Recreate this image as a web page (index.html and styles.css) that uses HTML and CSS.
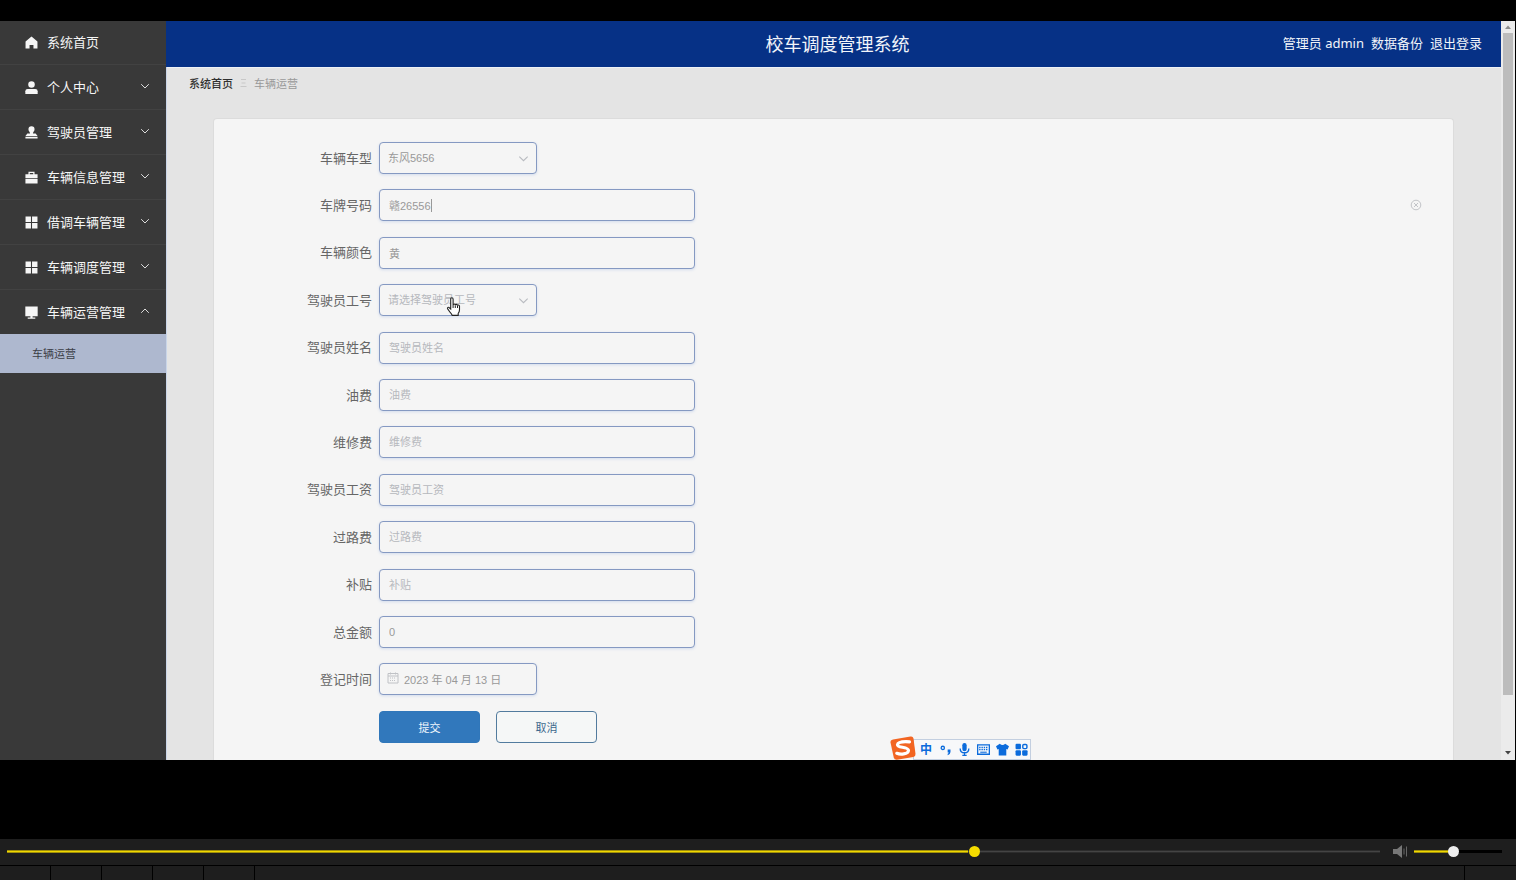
FILE: index.html
```html
<!DOCTYPE html>
<html lang="zh-CN">
<head>
<meta charset="utf-8">
<title>校车调度管理系统</title>
<link rel="stylesheet" href="styles.css">
</head>
<body>
<svg class="defs" aria-hidden="true">
  <symbol id="chevron" viewBox="0 0 10 10"><path d="M1.2 3.2 5 7l3.800-3.800" fill="none" stroke="currentColor"/></symbol>
  <symbol id="grid" viewBox="0 0 12 12"><path d="M.5.5h5v5h-5zM6.500.5h5v5h-5zM.5 6.500h5v5h-5zM6.500 6.500h5v5h-5z" fill="currentColor"/></symbol>
</svg>

<div class="screen">
  <nav class="sidebar">
    <a class="item first" href="#"><svg class="icon" viewBox="0 0 12 12"><path d="M6 .4 11.500 5v6.500H7.800V8.200H4.200v3.300H.5V5z" fill="currentColor"/></svg><span>系统首页</span></a>
    <a class="item" href="#"><svg class="icon" viewBox="0 0 12 12"><circle cx="6" cy="3.200" r="3" fill="currentColor"/><path d="M.3 12V9.500Q.3 7.300 2.500 7.300h7q2.200 0 2.200 2.200V12z" fill="currentColor"/></svg><span>个人中心</span><svg class="arrow"><use href="#chevron"/></svg></a>
    <a class="item" href="#"><svg class="icon" viewBox="0 0 12 12"><path d="M6 .3a2.800 2.800 0 0 1 2.800 2.900C8.800 4.800 7.300 5.500 7.300 7h2.500l1.800 2.300H.4L2.200 7h2.500c0-1.500-1.500-2.200-1.500-3.800A2.800 2.800 0 0 1 6 .3zM.4 10h11.200v1.500H.4z" fill="currentColor"/></svg><span>驾驶员管理</span><svg class="arrow"><use href="#chevron"/></svg></a>
    <a class="item" href="#"><svg class="icon" viewBox="0 0 12 12"><path d="M3.200 3V.8h5.600V3h2.800v3.500H.4V3zM4.400 3h3.200V1.900H4.400zM.4 7.200h11.200v4.300H.4z" fill="currentColor" fill-rule="evenodd"/></svg><span>车辆信息管理</span><svg class="arrow"><use href="#chevron"/></svg></a>
    <a class="item" href="#"><svg class="icon"><use href="#grid"/></svg><span>借调车辆管理</span><svg class="arrow"><use href="#chevron"/></svg></a>
    <a class="item" href="#"><svg class="icon"><use href="#grid"/></svg><span>车辆调度管理</span><svg class="arrow"><use href="#chevron"/></svg></a>
    <a class="item open" href="#"><svg class="icon" viewBox="0 0 12 12"><path d="M.3.5h11.400v9H7v1h2.500v1.200h-7v-1.200H5v-1H.3z" fill="currentColor"/></svg><span>车辆运营管理</span><svg class="arrow"><use href="#chevron"/></svg></a>
    <a class="subitem" href="#">车辆运营</a>
  </nav>

  <div class="main">
    <header class="header">
      <h1>校车调度管理系统</h1>
      <div class="account"><span>管理员 admin</span><a href="#">数据备份</a><a href="#">退出登录</a></div>
    </header>
    <nav class="crumbs"><a href="#">系统首页</a><svg viewBox="0 0 7 10"><path d="M1 1.500h5M1.500 5h4M.5 8.500h6" stroke="currentColor" fill="none"/></svg><span>车辆运营</span></nav>
    <form class="card">
      <div class="row"><label for="model">车辆车型</label><div class="field short"><select id="model"><option>东风5656</option></select><svg class="drop"><use href="#chevron"/></svg></div></div>
      <div class="row"><label for="plate">车牌号码</label><div class="field"><input id="plate" type="text" value="赣26556"><span class="caret"></span></div>
        <button class="clear" type="button" aria-label="清空"><svg viewBox="0 0 12 12"><path d="M4 4l4 4M8 4 4 8" stroke="currentColor"/><circle cx="6" cy="6" r="4.800" fill="none" stroke="currentColor"/></svg></button></div>
      <div class="row"><label for="color">车辆颜色</label><div class="field"><input id="color" type="text" value="黄"></div></div>
      <div class="row"><label for="driver">驾驶员工号</label><div class="field short"><select id="driver" class="empty"><option>请选择驾驶员工号</option></select><svg class="drop"><use href="#chevron"/></svg>
        <svg class="pointer" viewBox="0 0 14 20"><path d="M4.200 12V2.200q0-1.400 1.200-1.400t1.200 1.400V8q0-1 1.100-1T8.800 8.200q.1-.9 1.100-.8t1.100 1.200q.2-.7 1-.6t1 1.100v3.600q0 2.300-1.300 3.700v2H5.800q-.8-1.600-2.300-3.200L1.200 11.900q-.6-1 .2-1.500T3.100 11z" fill="#fff" stroke="#222" stroke-width="1.100"/><path d="M6.600 8v3M8.800 8.400V11M11 8.800V11" stroke="#222" fill="none"/></svg></div></div>
      <div class="row"><label for="name">驾驶员姓名</label><div class="field"><input id="name" type="text" placeholder="驾驶员姓名"></div></div>
      <div class="row"><label for="fuel">油费</label><div class="field"><input id="fuel" type="text" placeholder="油费"></div></div>
      <div class="row"><label for="repair">维修费</label><div class="field"><input id="repair" type="text" placeholder="维修费"></div></div>
      <div class="row"><label for="wage">驾驶员工资</label><div class="field"><input id="wage" type="text" placeholder="驾驶员工资"></div></div>
      <div class="row"><label for="toll">过路费</label><div class="field"><input id="toll" type="text" placeholder="过路费"></div></div>
      <div class="row"><label for="subsidy">补贴</label><div class="field"><input id="subsidy" type="text" placeholder="补贴"></div></div>
      <div class="row"><label for="total">总金额</label><div class="field"><input id="total" type="text" value="0"></div></div>
      <div class="row"><label for="date">登记时间</label><div class="field short"><input id="date" class="date" type="text" value="2023 年 04 月 13 日"><svg class="calendar" viewBox="0 0 12 12"><path d="M1 1.500h10v9.500H1zM1 4h10M3.500.5v2M8.500.5v2" fill="none" stroke="currentColor"/><path d="M3 6h6M3 8.500h6" stroke="currentColor" stroke-dasharray="1 1"/></svg></div></div>
      <div class="row actions"><button class="submit" type="submit">提交</button><button class="cancel" type="button">取消</button></div>
    </form>
  </div>

  <div class="scrollbar"><svg viewBox="0 0 8 4"><path d="M1 4 4 .5 7 4z" fill="#8c8c8c"/></svg><div class="thumb"></div><svg viewBox="0 0 8 4"><path d="M1 0 4 3.500 7 0z" fill="#444"/></svg></div>

  <div class="ime">
    <svg class="sogou" viewBox="0 0 26 24"><path d="M3 3.500 20.500.5q2.500-.4 3 2l2 15.500q.2 2.500-2.200 3L7 23.700q-2.500.3-3.200-2L.5 6.500Q.2 4 3 3.500z" fill="#f26522"/><path d="M19.500 5.800Q8 5 7.500 8.800C7.300 12 18.500 10.500 18.500 14.500 18.300 18.500 10 18.500 6.800 17.300" fill="none" stroke="#fff" stroke-width="3.200" stroke-linecap="round"/></svg>
    <div class="ime-bar">
      <span>中</span>
      <svg viewBox="0 0 12 12"><circle cx="3.500" cy="4.500" r="1.500" fill="none" stroke="currentColor" stroke-width="1.200"/><path d="M8 6h2.600v2.200Q10.500 10.500 8 11.200V10q1-.5 1-1.300H8z" fill="currentColor"/></svg>
      <svg viewBox="0 0 12 12"><rect x="4" y="0" width="4" height="7.500" rx="2" fill="currentColor"/><path d="M2 5q0 4 4 4t4-4M6 9v2.500M4 11.500h4" fill="none" stroke="currentColor" stroke-width="1.200"/></svg>
      <svg viewBox="0 0 12 12"><path d="M.6 1.800h10.800v8.600H.6z" fill="none" stroke="currentColor" stroke-width="1.200"/><path d="M2 4h8M2 6h8" stroke="currentColor" stroke-width="1.200" stroke-dasharray="1.300 .8"/><path d="M3 8.500h6" stroke="currentColor"/></svg>
      <svg viewBox="0 0 12 12"><path d="M3.500.7Q6 3 8.500.7L12 3l-1.300 3L9.500 5.500v6h-7v-6L1.300 6 0 3z" fill="currentColor"/></svg>
      <svg viewBox="0 0 12 12"><rect x=".5" y=".8" width="5" height="5" rx="1" fill="currentColor"/><rect x="7.200" y="1.400" width="3.800" height="3.800" rx="1" fill="none" stroke="currentColor" stroke-width="1.300"/><rect x=".5" y="6.700" width="5" height="5" rx="1" fill="currentColor"/><rect x="6.600" y="6.700" width="5" height="5" rx="1" fill="currentColor"/></svg>
    </div>
  </div>
</div>

<div class="player">
  <div class="controls">
    <input class="slider seek" type="range" min="0" max="1000" value="706" aria-label="播放进度">
    <svg class="speaker" viewBox="0 0 15 13"><path d="M0 4h4l5-4v13L4 9H0z" fill="#777"/><path d="M11 3.500v6M13.500 1.500v10" stroke="#666" stroke-width="1"/></svg>
    <input class="slider volume" type="range" min="0" max="1000" value="440" aria-label="音量">
  </div>
  <div class="strip"><i></i><i></i><i></i><i></i><i></i><i class="wide"></i><i></i></div>
</div>
</body>
</html>
```

FILE: styles.css
```css
* { box-sizing: border-box; }

body {
  margin: 0;
  padding-top: 21px;
  min-height: 100vh;
  display: flex;
  flex-direction: column;
  gap: 79px;
  background: #000;
  font-family: "Noto Sans", "Noto Sans CJK SC", sans-serif;
  font-size: 13px;
}

a { color: inherit; text-decoration: none; }
.defs { position: absolute; width: 0; height: 0; }

.screen {
  position: relative;
  flex: 1;
  display: flex;
  padding-right: 1px;
}

.sidebar {
  width: 166px;
  flex: none;
  background: #393939;
  color: #f6f6f6;
}

.item {
  display: flex;
  align-items: center;
  gap: 9px;
  height: 45px;
  padding: 0 16px 0 25px;
  border-bottom: 1px solid #424242;
}
.item.first { height: 44px; }
.item.open { height: 44px; border-bottom: 0; }
.item span { padding-bottom: 2px; }
.icon { width: 13px; height: 13px; flex: none; }
.arrow { width: 10px; height: 10px; margin: 0 0 2px auto; color: #ddd; }
.open .arrow { transform: rotate(180deg); }

.subitem {
  display: flex;
  align-items: center;
  height: 39px;
  padding: 0 0 2px 32px;
  background: #aeb8cf;
  color: #3c4048;
  font-size: 11px;
}

.main {
  flex: 1;
  min-width: 0;
  display: flex;
  flex-direction: column;
  background: #e4e4e4;
  border-left: 1px solid #c9d5e8;
}

.header {
  display: grid;
  grid-template-columns: 1fr auto 1fr;
  align-items: center;
  height: 46px;
  margin-left: -1px;
  padding: 0 19px 3px 27px;
  background: #063186;
  color: #f2f5fa;
}
.header h1 { grid-column: 2; margin: 0; font-size: 18px; font-weight: 400; }
.account { display: flex; justify-content: flex-end; gap: 7px; }

.crumbs {
  display: flex;
  align-items: center;
  height: 34px;
  padding: 0 0 3px 22px;
  border-top: 1px solid #eef1f6;
  color: #999;
  font-size: 11px;
}
.crumbs a { color: #303030; font-weight: 500; }
.crumbs svg { width: 7px; height: 10px; margin: 0 7px; color: #c8c8c8; }

.card {
  flex: 1;
  display: flex;
  flex-direction: column;
  justify-content: space-between;
  gap: 8px;
  margin: 17px 47px 0 46px;
  padding: 23px 31px 17px 24px;
  background: #f5f5f5;
  border: 1px solid #dcdcdc;
  border-bottom: 0;
  border-radius: 4px 4px 0 0;
}

.row { display: flex; align-items: center; }
.row label { width: 134px; margin-right: 7px; padding-bottom: 2px; flex: none; text-align: right; color: #666; }

.field { position: relative; width: 316px; height: 32px; }
.field.short { width: 158px; }
.field input,
.field select {
  display: block;
  width: 100%;
  height: 100%;
  padding: 0 9px;
  border: 1px solid #8599c2;
  border-radius: 4px;
  outline: 0;
  background: #f5f5f5;
  box-shadow: 0 1px 3px #d3dced;
  color: #999;
  font-family: "Liberation Sans", "Noto Sans CJK SC", sans-serif;
  font-size: 11px;
}
.field select { appearance: none; padding: 0 8px; }
.field .empty { color: #b5b8bd; }
.field input::placeholder { color: #b5b8bd; opacity: 1; }
.field .date { padding-left: 24px; }
.calendar { position: absolute; left: 8px; top: 9px; width: 12px; height: 12px; color: #c0c2c6; }
.drop { position: absolute; right: 8px; top: 11px; width: 11px; height: 11px; color: #b8bbc0; }
.caret { position: absolute; left: 52px; top: 10px; width: 1px; height: 13px; background: #999; }
.pointer { position: absolute; left: 67px; top: 13px; width: 15px; height: 20px; }

.clear { margin-left: auto; padding: 0; border: 0; background: none; color: #c2c4c8; }
.clear svg { display: block; width: 12px; height: 12px; }

.actions { gap: 16px; padding-left: 141px; }
.actions button {
  width: 101px;
  height: 32px;
  padding: 0;
  border: 1px solid #3077ba;
  border-radius: 4px;
  font-family: inherit;
  font-size: 11px;
}
.submit { background: #3178bc; color: #f2f7fc; }
.actions .cancel { background: #f5f7f7; border-color: #527b9e; color: #3c678c; }

.scrollbar {
  width: 14px;
  flex: none;
  display: flex;
  flex-direction: column;
  align-items: center;
  justify-content: space-between;
  padding: 4px 0 5px;
  background: #ebebeb;
}
.scrollbar svg { width: 8px; height: 4px; }
.thumb { width: 10px; flex: 0 1 662px; margin: 4px 0 auto; background: #bcbcbc; }

.ime {
  position: absolute;
  left: 890px;
  bottom: 0;
  display: flex;
  align-items: flex-end;
}
.sogou { width: 26px; height: 24px; z-index: 1; }
.ime-bar {
  display: flex;
  align-items: center;
  gap: 6px;
  height: 21px;
  margin-left: -3px;
  padding: 0 2px 0 6px;
  background: #f7f8fa;
  border: 1px solid #c3cfe0;
  color: #0b6bdc;
}
.ime-bar span { width: 13px; font-size: 12px; line-height: 18px; font-weight: 700; }
.ime-bar svg { width: 13px; height: 13px; }

.player { flex: none; background: #1e1e1e; }
.controls {
  display: flex;
  align-items: center;
  height: 27px;
  padding: 0 14px 1px 7px;
  border-bottom: 1px solid #000;
}
.slider {
  appearance: none;
  height: 11px;
  margin: 0;
  background: none;
}
.slider::-webkit-slider-runnable-track { height: 3px; }
.slider::-webkit-slider-thumb {
  appearance: none;
  width: 11px;
  height: 11px;
  margin-top: -4px;
  border-radius: 50%;
}
.seek { flex: 1; min-width: 0; }
.seek::-webkit-slider-runnable-track { background: linear-gradient(#a08f0a 1px, #f0d800 1px 2px, #a08f0a 2px) 0 0 / 70% 100% no-repeat, linear-gradient(#2c2c2c 1px, #444 1px 2px, #2c2c2c 2px); }
.seek::-webkit-slider-thumb { background: #f5dc00; }
.speaker { width: 15px; height: 13px; margin: 0 6px 0 13px; }
.volume { width: 88px; }
.volume::-webkit-slider-runnable-track { background: linear-gradient(#a08f0a 1px, #f0d800 1px 2px, #a08f0a 2px) 0 0 / 44% 100% no-repeat, #000; }
.volume::-webkit-slider-thumb { background: #eee; }

.strip { display: flex; height: 14px; }
.strip i { width: 51px; border-right: 1px solid #000; }
.strip .wide { flex: 1; }
.strip i:last-child { border-right: 0; }
```
